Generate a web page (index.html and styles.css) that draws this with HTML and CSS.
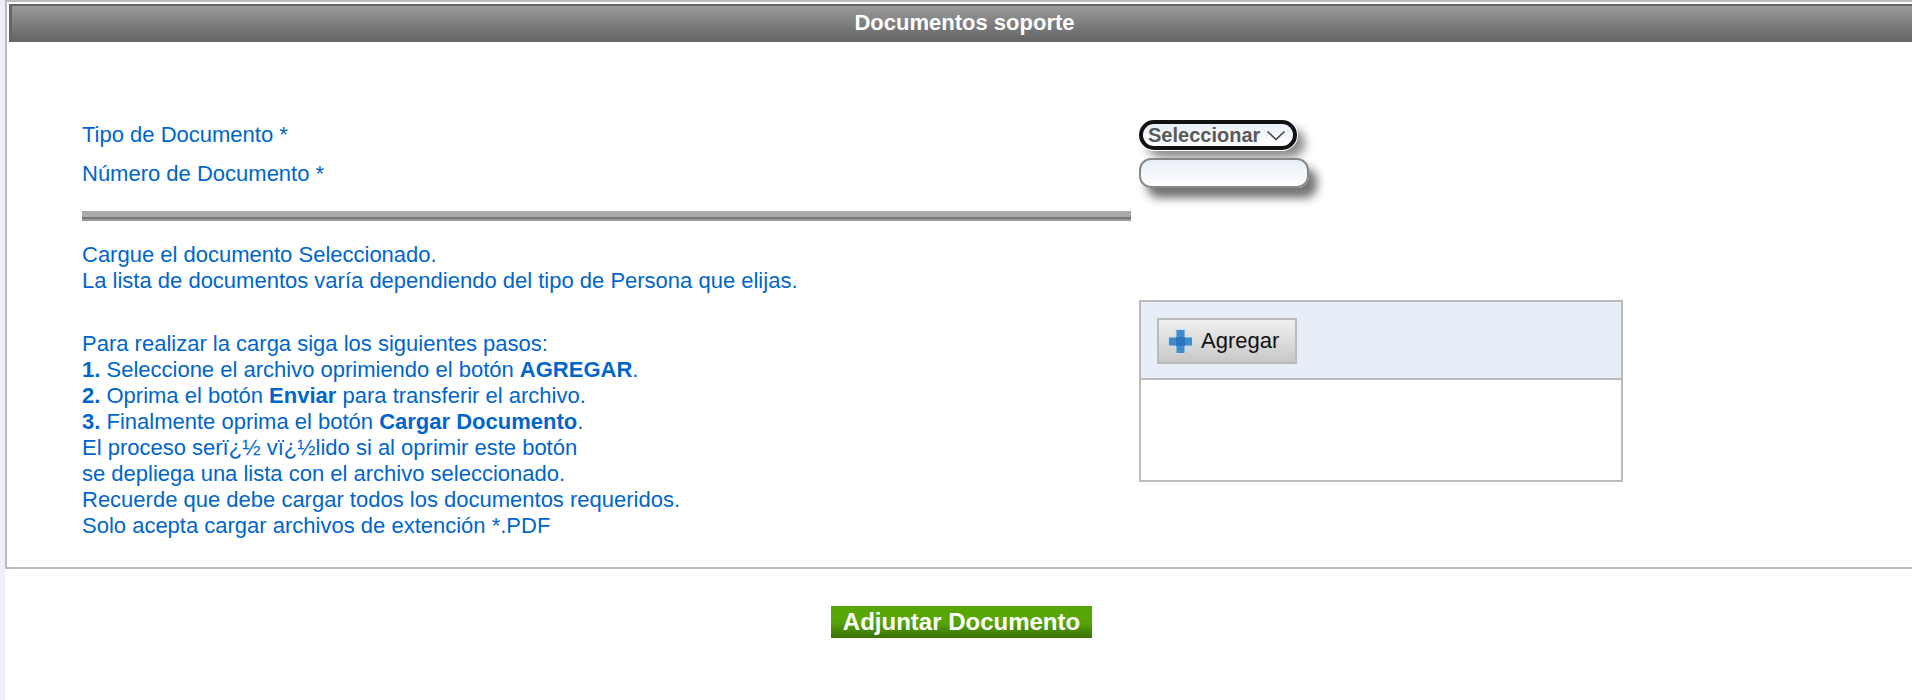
FILE: index.html
```html
<!DOCTYPE html>
<html lang="es">
<head>
    <meta charset="UTF-8">
    <meta name="viewport" content="width=device-width, initial-scale=1.0">
    <title>Documentos soporte</title>
    <link rel="stylesheet" href="styles.css">
</head>
<body>
    <div class="page">
        <div class="panel">
            <div class="panel-title">Documentos soporte</div>
            <div class="form-grid">
                <div class="left-col">
                    <div class="field-label first">Tipo de Documento *</div>
                    <div class="field-label">N&uacute;mero de Documento *</div>
                    <div class="divider"></div>
                    <p class="help intro">Cargue el documento Seleccionado.<br>La lista de documentos var&iacute;a dependiendo del tipo de Persona que elijas.</p>
                    <p class="help steps">
                        Para realizar la carga siga los siguientes pasos:<br>
                        <b>1.</b> Seleccione el archivo oprimiendo el bot&oacute;n <b>AGREGAR</b>.<br>
                        <b>2.</b> Oprima el bot&oacute;n <b>Enviar</b> para transferir el archivo.<br>
                        <b>3.</b> Finalmente oprima el bot&oacute;n <b>Cargar Documento</b>.<br>
                        El proceso ser&iuml;&iquest;&frac12; v&iuml;&iquest;&frac12;lido si al oprimir este bot&oacute;n<br>
                        se depliega una lista con el archivo seleccionado.<br>
                        Recuerde que debe cargar todos los documentos requeridos.<br>
                        Solo acepta cargar archivos de extenci&oacute;n *.PDF
                    </p>
                </div>
                <div class="right-col">
                    <div class="select-box">
                        <span>Seleccionar</span>
                        <svg class="chevron" width="20" height="11" viewBox="0 0 20 11"><path d="M1.5 1.5 L10 9.5 L18.5 1.5" fill="none" stroke="#444" stroke-width="1.6"/></svg>
                    </div>
                    <div class="text-box"></div>
                    <div class="uploader">
                        <div class="uploader-bar">
                            <div class="add-btn">
                                <svg class="plus" width="27" height="27" viewBox="0 0 27 27">
                                    <path d="M9 1.5h9v7.500h7.500v9H18v7.500H9V18H1.500V9H9z" fill="#3f8bcb" stroke="#c9dcec" stroke-width="1" stroke-linejoin="round"/>
                                    <path d="M9 9h9v9H9z" fill="#2b76bb"/>
                                </svg>
                                <span>Agregar</span>
                            </div>
                        </div>
                    </div>
                </div>
            </div>
        </div>
        <div class="submit-row">
            <div class="submit-btn">Adjuntar Documento</div>
        </div>
    </div>
</body>
</html>
```

FILE: styles.css
```css
html, body {
    margin: 0;
    height: 100%;
}

body {
    background-color: #eeeef5;
    font-family: "Liberation Sans", Arial, sans-serif;
    overflow: hidden;
}

.page {
    margin-left: 5px;
    height: 700px;
    background-color: #fff;
}

.panel {
    height: 563px;
    border: 2px solid #bbb;
    border-right: none;
    padding: 2px 0 0 2px;
}

.panel-title {
    height: 34px;
    line-height: 34px;
    padding-left: 5px;
    border: 2px solid #666;
    border-left-width: 3px;
    border-right: none;
    background: linear-gradient(to bottom, #999, #666);
    color: #fff;
    font-size: 22px;
    font-weight: bold;
    text-align: center;
}

.form-grid {
    display: flex;
    padding: 78px 0 0 73px;
}

.left-col {
    width: 1049px;
    margin-right: 8px;
    padding-top: 2px;
    color: #0066cc;
    font-size: 22px;
    line-height: 26px;
}

.field-label {
    margin-top: 13px;
}

.field-label.first {
    margin-top: 0;
}

.divider {
    height: 10px;
    margin-top: 24px;
    background: linear-gradient(to bottom, #aaa 0, #aaa 60%, #777 60%, #777 80%, #999 80%);
}

.help {
    margin: 0;
}

.intro {
    margin-top: 21px;
}

.steps {
    margin-top: 37px;
}

.right-col {
    width: 484px;
}

.select-box {
    width: 158px;
    height: 30px;
    box-sizing: border-box;
    display: flex;
    align-items: center;
    gap: 6px;
    padding-left: 5px;
    border: 4px solid #111;
    border-radius: 15px;
    background: linear-gradient(to bottom, #e8eef7, #fff);
    box-shadow: 0 0 0 1px #fff, 8px 8px 10px rgba(0, 0, 0, 0.45);
    color: #5a5a5a;
    font-size: 20px;
    font-weight: bold;
}

.text-box {
    width: 170px;
    height: 30px;
    box-sizing: border-box;
    margin-top: 8px;
    border: 2px solid #888;
    border-radius: 12px;
    background: linear-gradient(to bottom, #e8eef7, #fff);
    box-shadow: 8px 10px 10px rgba(0, 0, 0, 0.55);
}

.uploader {
    box-sizing: border-box;
    width: 484px;
    height: 182px;
    margin-top: 112px;
    border: 2px solid #bbb;
}

.uploader-bar {
    box-sizing: border-box;
    height: 78px;
    padding: 16px 0 0 16px;
    border-bottom: 2px solid #bbb;
    background-color: #e8eef7;
}

.add-btn {
    width: 140px;
    height: 46px;
    box-sizing: border-box;
    display: flex;
    align-items: center;
    gap: 7px;
    padding-left: 8px;
    border: 2px solid #bbb;
    background: linear-gradient(to bottom, #f0f0f0, #c8c8c8);
    color: #111;
    font-size: 22px;
}

.submit-row {
    display: flex;
    padding: 37px 0 0 826px;
}

.submit-btn {
    width: 261px;
    height: 32px;
    line-height: 31px;
    background: linear-gradient(to bottom, #58a605 0, #58a605 50%, #3a7106 100%);
    color: #fff;
    font-size: 24px;
    font-weight: bold;
    text-align: center;
}
```
